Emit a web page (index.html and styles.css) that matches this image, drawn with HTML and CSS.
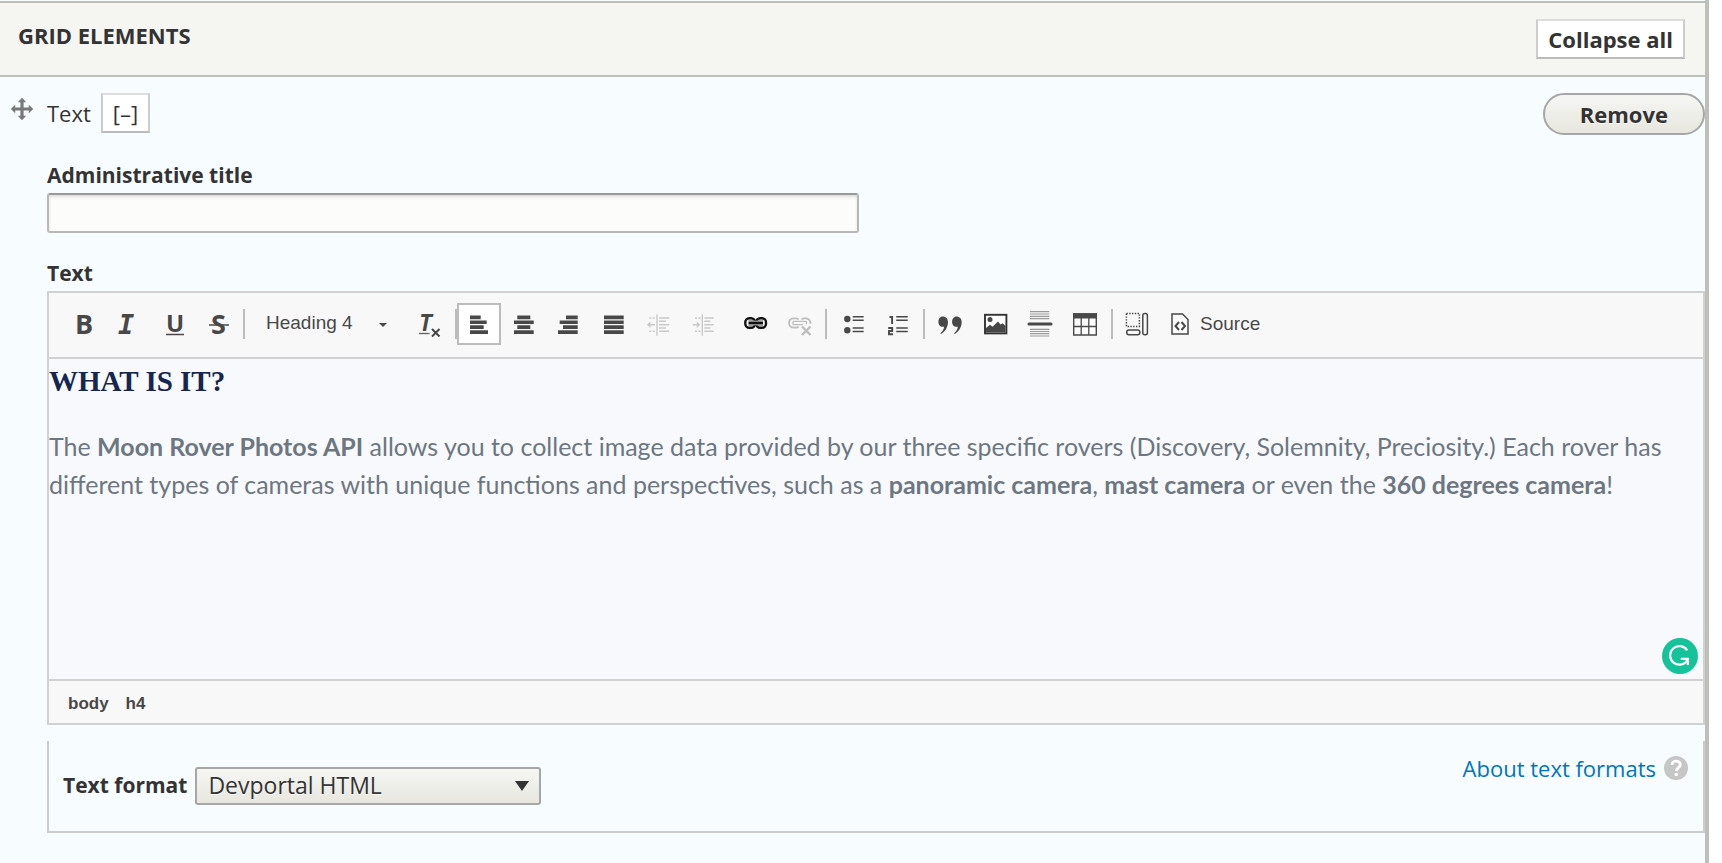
FILE: index.html
```html
<!DOCTYPE html>
<html lang="en">
<head>
<meta charset="utf-8">
<title>Grid elements</title>
<link rel="stylesheet" href="styles.css">
</head>
<body>
<main class="panel">
  <header class="panel-header">
    <h2 class="panel-title">GRID ELEMENTS</h2>
    <button type="button" class="link-button strong">Collapse all</button>
  </header>

  <section class="item">
    <div class="handle">
      <svg width="24" height="24" viewBox="0 0 24 24" fill="#787878" aria-hidden="true"><path d="M12 .8 16.200 5.200H13.600V10.400H18.800V7.800L23.200 12l-4.400 4.200V13.600H13.600V18.800H16.200L12 23.200 7.800 18.800H10.400V13.600H5.200V16.200L.8 12 5.200 7.800V10.400H10.400V5.200H7.800Z"/></svg>
    </div>
    <div class="item-body">
      <div class="item-head">
        <span class="item-type">Text</span>
        <button type="button" class="link-button">[–]</button>
        <button type="button" class="remove">Remove</button>
      </div>

      <label class="label" for="admin-title">Administrative title</label>
      <input class="text-input" id="admin-title" type="text">

      <div class="label spaced" id="text-label">Text</div>
      <div class="editor">
        <div class="toolbar" role="toolbar" aria-label="Editor toolbar">
          <div class="group">
            <button type="button" class="tool" aria-label="Bold"><svg viewBox="0 0 40 38"><text class="glyph" x="11" y="29" font-size="27">B</text></svg></button>
            <button type="button" class="tool" aria-label="Italic"><svg viewBox="0 0 40 38"><text class="glyph mono" x="9" y="29" font-size="27">I</text></svg></button>
            <button type="button" class="tool" aria-label="Underline"><svg viewBox="0 0 40 38"><text class="glyph" x="12" y="27" font-size="24">U</text><path d="M12 29.500h18" stroke="#484848" stroke-width="1.500"/></svg></button>
            <button type="button" class="tool" aria-label="Strikethrough"><svg viewBox="0 0 40 38"><text class="glyph" x="12" y="29" font-size="27">S</text><path d="M10 20h20" stroke="#484848" stroke-width="1.500"/></svg></button>
          </div>
          <span class="sep"></span>
          <div class="combo">
            <select class="combo-select" aria-label="Paragraph format"><option>Heading 4</option></select>
            <svg class="combo-arrow" width="8" height="4" viewBox="0 0 8 4" aria-hidden="true"><path d="M0 0h8L4 4Z" fill="#484848"/></svg>
          </div>
          <button type="button" class="tool" aria-label="Remove format"><svg viewBox="0 0 40 38"><text class="glyph mono" x="9" y="26" font-size="23">T</text><path d="M9 28.500h10.500" stroke="#666" stroke-width="1.400"/><path d="m22 24 7.500 7.500m0-7.500L22 31.500" stroke="#484848" stroke-width="2"/></svg></button>
          <span class="sep tight"></span>
          <div class="group">
            <button type="button" class="tool active" aria-label="Align left" aria-pressed="true"><svg viewBox="0 0 40 38" fill="#484848"><path d="M11 10.500h10.700v3.700H11zM11 15.400h16.700v3.700H11zM11 20.300h13.700V24H11zM11 25.200h18v3.700H11z"/></svg></button>
            <button type="button" class="tool" aria-label="Center"><svg viewBox="0 0 40 38" fill="#484848"><path d="M13.300 10.500h13v3.700h-13zM10 15.400h19.700v3.700H10zM13.300 20.300h13V24h-13zM10 25.200h19.700v3.700H10z"/></svg></button>
            <button type="button" class="tool" aria-label="Align right"><svg viewBox="0 0 40 38" fill="#484848"><path d="M17 10.500h11.700v3.700H17zM10.700 15.400h18v3.700h-18zM14 20.300h14.700V24H14zM9 25.200h19.700v3.700H9z"/></svg></button>
            <button type="button" class="tool" aria-label="Justify"><svg viewBox="0 0 40 38" fill="#484848"><path d="M10 10.500h19.700v3.700H10zM10 15.400h19.700v3.700H10zM10 20.300h19.700V24H10zM10 25.200h19.700v3.700H10z"/></svg></button>
            <button type="button" class="tool" aria-label="Decrease indent" disabled><svg viewBox="0 0 40 38" fill="none" stroke="#c9c9c9" stroke-width="1.400"><path d="M18 9.300v21.400M20 13h10.300M20 16.300h7M20 19.700h10.300M20 23h7M20 26.300h10.300M9 19.700h7"/><path d="M10.300 13h5.400M10.300 26.300h5.400" stroke-dasharray="2 1.400"/><path d="m11.500 16.500-3.500 3.200 3.500 3.200Z" fill="#c9c9c9" stroke="none"/></svg></button>
            <button type="button" class="tool" aria-label="Increase indent" disabled><svg viewBox="0 0 40 38" fill="none" stroke="#c9c9c9" stroke-width="1.400"><path d="M18.300 9.300v21.400M20.300 13h9.400M20.300 16.300h6M20.300 19.700h9.400M20.300 23h6M20.300 26.300h9.400M8.700 19.700h6"/><path d="M11 13h5.400M11 26.300h5.400" stroke-dasharray="2 1.400"/><path d="m12.800 16.500 3.500 3.200-3.500 3.200Z" fill="#c9c9c9" stroke="none"/></svg></button>
          </div>
          <div class="group next">
            <button type="button" class="tool" aria-label="Link"><svg viewBox="0 0 40 38" fill="none" stroke="#111"><rect x="9.300" y="13.300" width="9.800" height="9.400" rx="4" stroke-width="2.400"/><rect x="20.200" y="13.300" width="9.800" height="9.400" rx="4" stroke-width="2.400"/><path d="M12.500 18h14.500" stroke="#f8f8f8" stroke-width="4.500"/><path d="M12.500 16h14.500M12.500 20h14.500" stroke="#555" stroke-width="1"/><path d="M12.500 18h14.500" stroke-width="2.400"/></svg></button>
            <button type="button" class="tool" aria-label="Unlink" disabled><svg viewBox="0 0 40 38" fill="none" stroke="#bdbdbd"><path d="M17.500 14.500c-.5-1-1.500-1.200-2.500-1.200h-2.300a4.700 4.700 0 0 0 0 9.400H15c1 0 2-.2 2.500-1.200M20.500 14.500c.5-1 1.500-1.200 2.500-1.200h2a4.600 4.600 0 0 1 4.300 5.500" stroke-width="1.800"/><path d="M12 16.300h13.500M12 19.700h10M12 16.300v3.400M25.500 16.300v3" stroke-width="1.200"/><path d="m21 21.500 8.500 8.500m0-8.500L21 30" stroke-width="2.400"/></svg></button>
          </div>
          <span class="sep"></span>
          <div class="group after-sep">
            <button type="button" class="tool" aria-label="Bulleted list"><svg viewBox="0 0 40 38" stroke="#484848" stroke-width="1.600"><circle cx="13.300" cy="14" r="3.200" fill="#484848" stroke="none"/><circle cx="13.300" cy="25.300" r="3.200" fill="#484848" stroke="none"/><path d="M18.700 11.700h11M18.700 15.200h11M18.700 23h11M18.700 26.500h11"/></svg></button>
            <button type="button" class="tool" aria-label="Numbered list"><svg viewBox="0 0 40 38" fill="none" stroke="#484848" stroke-width="1.600"><path d="M17.200 11.700h11.500M17.200 15.200h11.500M17.200 23h11.500M17.200 26.500h11.500"/><path d="M10.500 12h2.600v7M9.200 23h4v3H10v3.200h4" stroke-width="1.900"/></svg></button>
          </div>
          <span class="sep"></span>
          <div class="group near-sep">
            <button type="button" class="tool" aria-label="Block quote"><svg viewBox="0 0 40 38" fill="#484848"><path d="M12.800 11.500c3 0 5.200 2.200 5.200 5.600 0 5.400-3.200 9.800-7 11.900l-.6-.7c2.200-2 3.500-4.300 3.700-6.600-3.300.8-5.700-1.500-5.700-4.800 0-3 1.800-5.400 4.400-5.400ZM26.500 11.500c3 0 5.200 2.200 5.200 5.600 0 5.400-3.200 9.800-7 11.900l-.6-.7c2.200-2 3.500-4.300 3.700-6.600-3.300.8-5.700-1.500-5.700-4.800 0-3 1.800-5.400 4.400-5.400Z"/></svg></button>
            <button type="button" class="tool" aria-label="Image"><svg viewBox="0 0 40 38"><rect x="10" y="9.800" width="21.400" height="18.600" fill="#fff" stroke="#333" stroke-width="1.900"/><circle cx="15" cy="14.500" r="2.500" fill="#484848"/><path d="M11 27.500v-4.500l4-3.200 2.500 2 5.500-5.300 2.500 3 2-1.300 3 2.500v6.800Z" fill="#484848"/></svg></button>
            <button type="button" class="tool" aria-label="Horizontal line"><svg viewBox="0 0 40 38" stroke="#999" stroke-width="1.200"><path d="M10 6.700h19.300M10 9h19.300M10 11.300h19.300M10 13.600h19.300M10 24.300h19.300M10 26.500h19.300M10 28.700h19.300M10 31h19.300"/><path d="M9 19.100h22" stroke="#484848" stroke-width="3" stroke-linecap="round"/></svg></button>
            <button type="button" class="tool" aria-label="Table"><svg viewBox="0 0 40 38"><path d="M8.700 9h22.600v21H8.700z" fill="#fff" stroke="#484848" stroke-width="1.400"/><path d="M8 8.300h24v5.200H8z" fill="#484848"/><path d="M16.200 13v17M23.800 13v17M8.700 21.500h22.600" stroke="#484848" stroke-width="1.300"/></svg></button>
          </div>
          <span class="sep wide"></span>
          <div class="group near-sep">
            <button type="button" class="tool" aria-label="Show blocks"><svg viewBox="0 0 40 38" fill="none" stroke="#484848" stroke-width="1.500"><rect x="8.400" y="8.400" width="13" height="13" stroke-dasharray="1.400 1.400"/><rect x="24.800" y="8.400" width="4.600" height="21.400" rx="2"/><rect x="8.800" y="25" width="13" height="4.800" rx="2"/></svg></button>
            <button type="button" class="source"><svg width="18" height="22" viewBox="0 0 18 22" fill="none" stroke="#484848" aria-hidden="true"><path d="M1 1h10.500L17 6.500V21H1Z" fill="#fbfbfb" stroke-width="1.500"/><path d="m8 9-3.500 4L8 17M10.500 9l3.500 4-3.500 4" stroke-width="2"/></svg>Source</button>
          </div>
        </div>
        <div class="content" contenteditable="true" spellcheck="false" role="textbox" aria-labelledby="text-label">
          <h4 class="content-title">WHAT IS IT?</h4>
          <p class="content-text">The <strong>Moon Rover Photos API</strong> allows you to collect image data provided by our three specific rovers (Discovery, Solemnity, Preciosity.) Each rover has different types of cameras with unique functions and perspectives, such as a <strong>panoramic camera</strong>, <strong>mast camera</strong> or even the <strong>360 degrees camera</strong>!</p>
        </div>
        <button type="button" class="checker" aria-label="Check writing"><svg width="36" height="36" viewBox="0 0 36 36" fill="none" stroke="#fff" stroke-width="2.200"><circle cx="18" cy="18" r="18" fill="#15c39a" stroke="none"/><path d="M25.200 12.300A9.300 9.300 0 1 0 25.500 22"/><path d="M18.800 20.800h7v6.200"/></svg></button>
        <footer class="path">
          <a class="path-link" href="#body">body</a>
          <a class="path-link" href="#h4">h4</a>
        </footer>
      </div>

      <div class="format">
        <label class="format-label" for="format">Text format</label>
        <div class="format-field">
          <select class="format-select" id="format"><option>Devportal HTML</option></select>
          <svg class="format-arrow" width="14" height="10" viewBox="0 0 14 10" aria-hidden="true"><path d="M0 0h14L7 10Z" fill="#333"/></svg>
        </div>
        <a class="about" href="#formats">About text formats
          <svg width="24" height="24" viewBox="0 0 24 24" fill="none" aria-hidden="true"><circle cx="12" cy="12" r="12" fill="#c6c6c6"/><path d="M8 9c0-5 8.300-5 8.300-.3 0 3-3.900 3-3.900 6.300" stroke="#fff" stroke-width="2.800"/><circle cx="12.300" cy="18.500" r="1.800" fill="#fff"/></svg>
        </a>
      </div>
    </div>
  </section>
</main>
</body>
</html>
```
FILE: styles.css
```css
* {
  box-sizing: border-box;
}

body {
  margin: 0;
  padding-right: 13px;
  background: #fff;
  color: #333;
  font: 22px/28px "Open Sans", "Noto Sans", sans-serif;
}

button,
input,
select {
  margin: 0;
  color: inherit;
  font: inherit;
}

.panel {
  min-height: 100vh;
  padding-top: 1px;
  border-right: 4px solid #bfbfba;
  background: #f7fcff;
}

.panel-header {
  display: flex;
  align-items: flex-start;
  justify-content: space-between;
  padding: 16px 20px 16px 18px;
  border-top: 2px solid #bfbfba;
  border-bottom: 2px solid #bfbfba;
  background: #f5f5f2;
}

.panel-title {
  margin: 2px 0 0;
  font-size: 22px;
  line-height: 28px;
}

.link-button {
  height: 40px;
  padding: 0 10px;
  border: 2px solid #ccc;
  border-top-color: #ddd;
  border-bottom-color: #bbb;
  background: #fff;
}

.strong {
  font-weight: 700;
}

.item {
  display: flex;
  padding-top: 16px;
}

.handle {
  width: 47px;
  padding: 4px 10px;
  flex: none;
}

.item-body {
  flex: 1;
  min-width: 0;
}

.item-head {
  display: flex;
  align-items: flex-start;
  margin-bottom: 26px;
}

.item-type {
  margin-right: 10px;
  line-height: 40px;
}

.remove {
  height: 42px;
  margin-left: auto;
  padding: 0 35px;
  border: 2px solid #a6a6a6;
  border-radius: 21px;
  background: linear-gradient(#f6f6f3, #e7e7df);
  font-weight: 700;
  text-shadow: 0 1px #fff;
}

.label {
  display: block;
  margin-bottom: 4px;
  font-size: 21px;
  font-weight: 700;
}

.spaced {
  margin-top: 26px;
}

.text-input {
  display: block;
  width: 49%;
  height: 40px;
  padding: 0 8px;
  border: 2px solid #b8b8b8;
  border-top-color: #999;
  border-radius: 3px;
  background: #fcfcfa;
  box-shadow: inset 0 2px 3px rgba(0, 0, 0, .12);
}

.editor {
  position: relative;
  border: 2px solid #d1d1d1;
}

.toolbar {
  display: flex;
  align-items: center;
  flex-wrap: wrap;
  padding: 10px 13px 12px;
  border-bottom: 2px solid #d1d1d1;
  background: #f8f8f8;
  color: #484848;
  font-family: "Liberation Sans", Arial, sans-serif;
  font-size: 19px;
}

.group {
  display: flex;
  gap: 1px;
}

.next {
  margin-left: 8px;
}

.after-sep {
  margin-left: 5px;
}

.near-sep {
  margin-left: 3px;
}

.tool {
  width: 44px;
  height: 42px;
  padding: 0;
  border: 2px solid transparent;
  background: none;
}

.tool svg {
  display: block;
  width: 40px;
  height: 38px;
}

.active {
  border-color: #bcbcbc;
  background: #fff;
}

.glyph {
  fill: #484848;
  font-family: "Open Sans", sans-serif;
  font-weight: 700;
}

.mono {
  font-family: "DejaVu Sans Mono", monospace;
  font-style: italic;
}

.sep {
  width: 2px;
  height: 30px;
  margin-left: 2px;
  background: #bcbcbc;
}

.tight {
  margin-left: 3px;
}

.wide {
  margin-left: 4px;
}

.combo {
  position: relative;
  width: 163px;
}

.combo-select {
  width: 100%;
  height: 42px;
  padding: 0 32px 2px 21px;
  border: 0;
  appearance: none;
  background: none;
}

.combo-arrow {
  position: absolute;
  top: 20px;
  right: 21px;
  pointer-events: none;
}

.source {
  display: flex;
  align-items: center;
  gap: 11px;
  height: 42px;
  padding: 0 10px;
  border: 0;
  background: none;
}

.content {
  min-height: 320px;
  background: #f8f9fd;
  color: #6c7781;
  font: 25px/38px Lato, sans-serif;
}

.content-title {
  margin: 0;
  padding-top: 5px;
  color: #15264f;
  font: 700 29px/34px "Liberation Serif", "Times New Roman", serif;
}

.content-text {
  margin: 0;
  padding: 29px 20px 20px 0;
}

.checker {
  position: absolute;
  right: 5px;
  bottom: 49px;
  padding: 0;
  border: 0;
  background: none;
}

.checker svg {
  display: block;
}

.path {
  display: flex;
  gap: 17px;
  padding: 11px 19px 7px;
  border-top: 2px solid #d1d1d1;
  background: #f8f8f8;
  font: 700 17px/24px "Liberation Sans", Arial, sans-serif;
}

.path-link {
  color: #484848;
  text-decoration: none;
}

.format {
  display: flex;
  align-items: flex-start;
  margin-top: 16px;
  padding: 26px 15px 26px 14px;
  border: 2px solid #ccc;
  border-top: 0;
}

.format-label {
  margin-right: 8px;
  font-size: 21px;
  font-weight: 700;
  line-height: 36px;
}

.format-field {
  position: relative;
  width: 346px;
}

.format-select {
  display: block;
  width: 100%;
  height: 38px;
  padding: 0 36px 2px 11px;
  border: 2px solid #a6a6a6;
  border-radius: 3px;
  appearance: none;
  background: linear-gradient(#f6f6f3, #e7e7df);
  font-size: 23px;
  text-shadow: 0 1px #fff;
}

.format-arrow {
  position: absolute;
  top: 14px;
  right: 12px;
  pointer-events: none;
}

.about {
  display: flex;
  align-items: center;
  gap: 8px;
  margin: -13px 0 0 auto;
  color: #0074bd;
  text-decoration: none;
}
```
